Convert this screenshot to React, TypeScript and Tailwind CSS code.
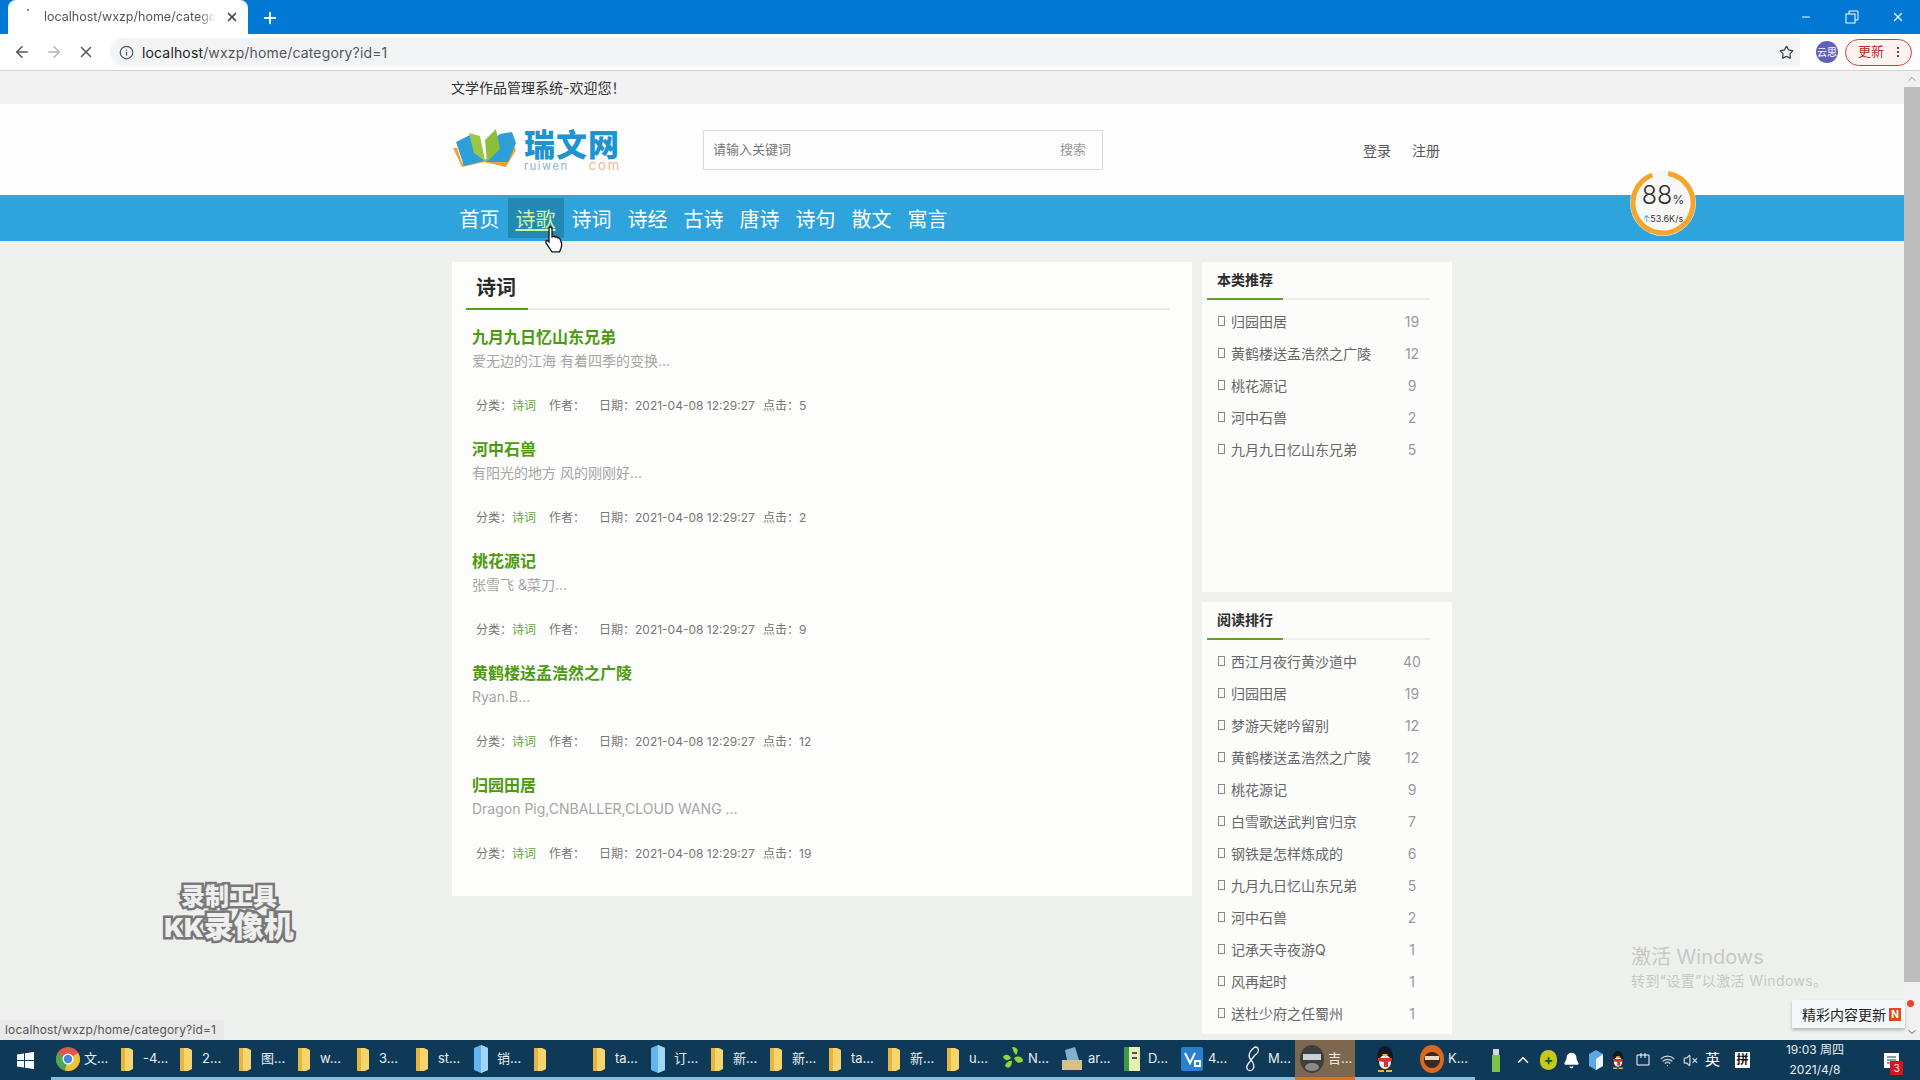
import React from "react";
import { ArrowLeft, ArrowRight, X, Info, Plus, Star, Minus, ChevronUp, ChevronDown, Bell, Wifi, VolumeX } from "lucide-react";

const CJK = "font-['Inter','Noto_Sans_CJK_SC',sans-serif]";

const posts = [
  { t: "九月九日忆山东兄弟", d: "爱无边的江海 有着四季的变换...", n: 5 },
  { t: "河中石兽", d: "有阳光的地方 风的刚刚好...", n: 2 },
  { t: "桃花源记", d: "张雪飞 &菜刀...", n: 9 },
  { t: "黄鹤楼送孟浩然之广陵", d: "Ryan.B...", n: 12 },
  { t: "归园田居", d: "Dragon Pig,CNBALLER,CLOUD WANG ...", n: 19 },
];
const rec: [string, number][] = [
  ["归园田居", 19],
  ["黄鹤楼送孟浩然之广陵", 12],
  ["桃花源记", 9],
  ["河中石兽", 2],
  ["九月九日忆山东兄弟", 5],
];
const rank: [string, number][] = [
  ["西江月夜行黄沙道中", 40],
  ["归园田居", 19],
  ["梦游天姥吟留别", 12],
  ["黄鹤楼送孟浩然之广陵", 12],
  ["桃花源记", 9],
  ["白雪歌送武判官归京", 7],
  ["钢铁是怎样炼成的", 6],
  ["九月九日忆山东兄弟", 5],
  ["河中石兽", 2],
  ["记承天寺夜游Q", 1],
  ["风再起时", 1],
  ["送杜少府之任蜀州", 1],
];
const nav = ["首页", "诗歌", "诗词", "诗经", "古诗", "唐诗", "诗句", "散文", "寓言"];

function Folder() {
  return (
    <svg width="14" height="28" viewBox="0 0 14 28" className="shrink-0">
      <path d="M1 3h8l4 2v19l-4 2H1z" fill="#f6d56f" />
      <path d="M1 3h4v23H1z" fill="#e7b53e" />
    </svg>
  );
}
function Cube() {
  return (
    <svg width="16" height="30" viewBox="0 0 16 30" className="shrink-0">
      <path d="M8 1l7 3v22l-7 3-7-3V4z" fill="#62b5ee" />
      <path d="M8 1l7 3v22l-7 3z" fill="#9fd6f8" />
    </svg>
  );
}
function Chrome() {
  return (
    <svg width="24" height="24" viewBox="0 0 24 24" className="shrink-0">
      <circle cx="12" cy="12" r="12" fill="#e2574c" />
      <path d="M12 12L1.6 6 0 12a12 12 0 0 0 9 11.6z" fill="#4da74f" />
      <path d="M12 12l-3 11.6A12 12 0 0 0 24 12a12 12 0 0 0-2-6z" fill="#f0c33c" />
      <circle cx="12" cy="12" r="5.5" fill="#fff" />
      <circle cx="12" cy="12" r="4.2" fill="#4b86d6" />
    </svg>
  );
}
function Penguin({ size = 24 }: { size?: number }) {
  return (
    <svg width={size} height={size * 1.4} viewBox="0 0 20 28" className="shrink-0">
      <ellipse cx="10" cy="12" rx="8" ry="11" fill="#15181c" />
      <ellipse cx="10" cy="17" rx="6" ry="7" fill="#f4f4f4" />
      <path d="M3 13h14v3l-4 1v5H9v-5l-6-1z" fill="#d8322a" />
      <path d="M7 9h6l-3 3z" fill="#f2b632" />
      <path d="M3 25h6v2H3zM11 25h6v2h-6z" fill="#f2b632" />
    </svg>
  );
}

function TaskItem({ icon, label, w = "w-[59px]", active }: { icon: React.ReactNode; label?: string; w?: string; active?: boolean }) {
  return (
    <div className={`${w} h-10 shrink-0 flex items-center pl-[4px] gap-[3px] border-b-[3px] ${active ? "bg-[#7d674e] border-[#e2701c]" : "border-[#88bedd]"} text-[13px] text-[#e7eef3] ${CJK} ${label === undefined ? "justify-center pr-[4px]" : ""}`}>
      <span className="w-[26px] flex justify-center shrink-0">{icon}</span>
      {label ? <span className="whitespace-nowrap">{label}</span> : null}
    </div>
  );
}

function SideRow({ name, n }: { name: string; n: number }) {
  return (
    <li className="h-8 flex items-center pl-[16px] pr-[25px] text-[14px] text-[#666]">
      <span className="w-[7px] h-[10px] border border-[#888] shrink-0" />
      <span className="ml-[6px] flex-1 whitespace-nowrap">{name}</span>
      <span className="w-[30px] text-center text-[#999]">{n}</span>
    </li>
  );
}

function Side({ title, rows, cls }: { title: string; rows: [string, number][]; cls: string }) {
  return (
    <section className={`bg-[#fcfdfb] ${cls}`}>
      <div className="h-[38px] ml-[5px] mr-[22px] border-b-2 border-[#eceeec] relative">
        <h3 className="pl-[10px] pt-[7px] text-[14px] leading-[22px] font-bold text-[#2b2b2b]">{title}</h3>
        <span className="absolute left-0 -bottom-[2px] w-[76px] h-[2px] bg-[#5f9e2f]" />
      </div>
      <ul className="mt-[5px]">
        {rows.map((r) => (
          <SideRow key={r[0]} name={r[0]} n={r[1]} />
        ))}
      </ul>
    </section>
  );
}

function Logo() {
  return (
    <div className="flex items-center w-[170px] h-[44px]">
      <svg width="70" height="44" viewBox="0 0 70 44" className="shrink-0">
        <path d="M1 20l9 19 22-5 22 5 10-17-3-5-9 17-20-3-22 4-5-15z" fill="#eba32f" />
        <path d="M4 14l14-7 8 4 6 22-20 5z" fill="#2e9ed9" />
        <path d="M60 4l4 11-8 19-22 0 6-22 8-6z" fill="#2e9ed9" />
        <path d="M17 5l11 3 5 25-11-8z" fill="#9cc745" />
        <path d="M44 1l4 20-13 13-2-22z" fill="#8ebd3c" />
      </svg>
      <div className="ml-[2px] flex flex-col pt-[3px]">
        <span className="text-[31px] leading-[29px] font-black tracking-[1px] text-[#1e93d2] whitespace-nowrap">瑞文网</span>
        <span className="text-[11px] leading-[12px] tracking-[1.6px] text-[#8db4cb] whitespace-nowrap">
          ruiwen<span className="ml-[20px] text-[13px] tracking-[2px] text-[#f0b98a]">com</span>
        </span>
      </div>
    </div>
  );
}

export default function App() {
  return (
    <div className={`relative w-[1920px] h-[1080px] overflow-hidden flex flex-col bg-[#eef0ed] ${CJK}`}>
      {/* tab strip */}
      <div className="h-[34px] bg-[#0078d4] flex items-end shrink-0">
        <div className="relative ml-[8px] w-[240px] h-[34px] bg-white rounded-t-[8px] flex items-center pl-[36px] pr-[9px] text-[12.5px] text-[#555]">
          <span className="absolute left-[19px] top-[9px] w-[2px] h-[2px] bg-[#888]" />
          <span className="whitespace-nowrap [mask-image:linear-gradient(to_right,black_90%,transparent)]">localhost/wxzp/home/catego</span>
          <div className="flex-1" />
          <X size={14} strokeWidth={3} className="text-[#444] shrink-0" />
        </div>
        <Plus size={18} strokeWidth={2.5} className="text-white ml-[13px] mb-[7px]" />
        <div className="flex-1" />
        <div className="flex items-center h-[34px] pr-[15px] text-white">
          <Minus size={12} />
          <svg width="16" height="16" viewBox="0 0 16 16" className="ml-[33px]">
            <rect x="1" y="5" width="9" height="9" fill="none" stroke="#fff" strokeWidth="1" />
            <path d="M4 5V2h9v9h-3" fill="none" stroke="#fff" strokeWidth="1" />
          </svg>
          <X size={14} className="ml-[30px]" />
        </div>
      </div>
      {/* toolbar */}
      <div className="h-[37px] bg-white border-b border-[#d2d2d2] flex items-center shrink-0">
        <ArrowLeft size={18} className="ml-[13px] text-[#555]" />
        <ArrowRight size={18} className="ml-[14px] text-[#b5b5b5]" />
        <X size={18} className="ml-[14px] text-[#555]" />
        <div className="ml-[15px] w-[1690px] h-[28px] rounded-l-[14px] bg-[#f1f3f5] flex items-center pl-[9px] text-[14px] text-[#555] tracking-[0.15px]">
          <Info size={15} className="text-[#555] shrink-0" />
          <span className="ml-[8px]"><span className="text-[#222]">localhost</span>/wxzp/home/category?id=1</span>
          <div className="flex-1" />
          <Star size={15} className="text-[#444] mr-[6px]" />
        </div>
        <div className="ml-[16px] w-[22px] h-[22px] rounded-full bg-[#5f62bd] text-white text-[10px] flex items-center justify-center shrink-0 whitespace-nowrap">云思</div>
        <div className="ml-[7px] w-[67px] h-[27px] rounded-full border border-[#d23a3a] bg-[#fdf3f1] flex items-center pl-[12px] text-[13px] text-[#b82d26] shrink-0">
          更新
          <span className="ml-[13px] flex flex-col gap-[2px]">
            <span className="w-[2px] h-[2px] bg-[#b82d26]" />
            <span className="w-[2px] h-[2px] bg-[#b82d26]" />
            <span className="w-[2px] h-[2px] bg-[#b82d26]" />
          </span>
        </div>
      </div>

      <div className="flex-1 min-h-0 flex">
        {/* page */}
        <div className="flex-1 min-w-0 flex flex-col">
          <div className="h-[33px] bg-[#f2f2f3] pl-[451px] flex items-center text-[14px] text-[#333] shrink-0">文学作品管理系统-欢迎您！</div>
          <div className="h-[91px] bg-[#fdfefd] flex items-center pl-[452px] shrink-0">
            <Logo />
            <div className="ml-[81px] w-[400px] h-[40px] border border-[#d9d9d9] bg-[#fdfdfd] flex items-center pl-[9px] pr-[16px] text-[13px] text-[#777]">
              <span className="flex-1">请输入关键词</span>
              <span className="text-[#999]">搜索</span>
            </div>
            <span className="ml-[260px] pt-[1px] text-[14px] text-[#555]">登录</span>
            <span className="ml-[21px] pt-[1px] text-[14px] text-[#555]">注册</span>
          </div>
          <div className="h-[46px] bg-[#2ea3dc] pl-[452px] flex items-center shrink-0 border-b border-[#e4e7e6] box-content">
            {nav.map((n, i) => (
              <div key={n} className={`w-[56px] h-[40px] flex items-center justify-center pt-[3px] pr-[1px] text-[20px] ${i === 1 ? "bg-[#2389b4] text-[#c6f79a] underline underline-offset-2" : "text-white"}`}>
                {n}
              </div>
            ))}
          </div>

          <div className="flex-1 min-h-0 flex items-start pl-[452px] pt-[20px] gap-[10px]">
            <main className="w-[740px] h-[634px] bg-[#fdfefc] pl-[14px] pr-[22px] shrink-0">
              <div className="h-[48px] border-b-2 border-[#e9ebe9] relative">
                <h2 className="pl-[10px] pt-[12px] text-[20px] leading-[28px] font-bold text-[#2b2b2b]">诗词</h2>
                <span className="absolute left-0 -bottom-[2px] w-[62px] h-[2px] bg-[#53a011]" />
              </div>
              {posts.map((p) => (
                <article key={p.t} className="h-[112px] pl-[6px] pt-[15px] first:pt-[16px]">
                  <h4 className="text-[16px] leading-[24px] font-bold text-[#4c9a10]">{p.t}</h4>
                  <p className="text-[14px] leading-[24px] text-[#a5a5a5] whitespace-nowrap">{p.d}</p>
                  <p className="mt-[23px] pl-[4px] flex text-[12px] leading-[20px] text-[#777]">
                    <span className="w-[36px]">分类：</span>
                    <span className="w-[37px] text-[#63a63a]">诗词</span>
                    <span className="w-[50px]">作者：</span>
                    <span className="w-[164px]">日期：2021-04-08 12:29:27</span>
                    <span>点击：{p.n}</span>
                  </p>
                </article>
              ))}
            </main>
            <div className="w-[250px] shrink-0 flex flex-col gap-[10px]">
              <Side title="本类推荐" rows={rec} cls="h-[330px]" />
              <Side title="阅读排行" rows={rank} cls="h-[432px]" />
            </div>
          </div>
        </div>
        {/* scrollbar */}
        <div className="w-[16px] bg-[#f1f1f1] flex flex-col items-center shrink-0">
          <ChevronUp size={12} className="text-[#999] my-[2px] shrink-0" />
          <div className="w-full h-[895px] bg-[#bcbdbc] shrink-0" />
          <div className="flex-1" />
          <ChevronDown size={12} className="text-[#555] my-[2px] shrink-0" />
        </div>
      </div>

      {/* taskbar */}
      <div className="h-10 bg-[#0f3a57] flex items-center shrink-0">
        <div className="w-[51px] flex justify-center shrink-0">
          <svg width="17" height="17" viewBox="0 0 17 17"><path d="M0 2.4l7-1v6.6H0zM8 1.2L17 0v8H8zM0 9h7v6.6l-7-1zM8 9h9v8l-9-1.2z" fill="#fff" /></svg>
        </div>
        <TaskItem icon={<Chrome />} label="文..." />
        {[
          ["f", "-4..."], ["f", "2..."], ["f", "图..."], ["f", "w..."], ["f", "3..."], ["f", "st..."], ["c", "销..."], ["f", ""], ["f", "ta..."], ["c", "订..."], ["f", "新..."], ["f", "新..."], ["f", "ta..."], ["f", "新..."], ["f", "u..."],
        ].map(([k, l], i) => (
          <TaskItem key={i} icon={k === "f" ? <Folder /> : <Cube />} label={l} />
        ))}
        <TaskItem w="w-[60px]" label="N..." icon={<svg width="24" height="26" viewBox="0 0 24 26" className="shrink-0"><path d="M12 1c6 0 7 4 4 8-2-2-3-5-4-8zM3 11c2-4 7-2 8 1-3 3-6 3-8-1zM14 12c4-3 9-1 9 3-3 3-7 2-9-3zM5 20c1-4 5-6 7-5 0 5-3 9-7 5z" fill="#90d536" /></svg>} />
        <TaskItem w="w-[60px]" label="ar..." icon={<svg width="24" height="26" viewBox="0 0 24 26" className="shrink-0"><path d="M2 14h20v10H2z" fill="#d9c08b" /><path d="M5 4l10-3 4 13H7z" fill="#7fb3c9" /></svg>} />
        <TaskItem w="w-[60px]" label="D..." icon={<svg width="20" height="26" viewBox="0 0 20 26" className="shrink-0"><path d="M2 1h16v24H2z" fill="#e8efb5" /><path d="M2 1h5v24H2z" fill="#3d9a45" /><path d="M10 6h5v2h-5zM10 11h5v2h-5z" fill="#555" /></svg>} />
        <TaskItem w="w-[60px]" label="4..." icon={<svg width="22" height="24" viewBox="0 0 22 24" className="shrink-0"><rect width="22" height="24" rx="2" fill="#2b7fd3" /><path d="M4 6l5 10 5-10M14 14h5v5h-5z" stroke="#fff" strokeWidth="2" fill="none" /></svg>} />
        <TaskItem w="w-[60px]" label="M..." icon={<svg width="20" height="28" viewBox="0 0 20 28" className="shrink-0"><path d="M13 2c4 0 5 5 0 8L6 19c-3 4 0 8 4 6 3-2 2-7-1-10-3-3-3-8 4-13z" stroke="#e6edf2" strokeWidth="1.3" fill="none" /></svg>} />
        <TaskItem w="w-[60px]" active label="吉..." icon={<svg width="26" height="30" viewBox="0 0 26 30" className="shrink-0"><ellipse cx="13" cy="15" rx="12" ry="14" fill="#3f3f3f" /><rect x="4" y="10" width="18" height="6" fill="#cfcfcf" /><ellipse cx="13" cy="23" rx="7" ry="4" fill="#8a8a8a" /></svg>} />
        <TaskItem w="w-[60px]" icon={<Penguin size={20} />} />
        <TaskItem w="w-[60px]" label="K..." icon={<svg width="26" height="30" viewBox="0 0 26 30" className="shrink-0"><ellipse cx="13" cy="15" rx="12" ry="14" fill="#d9691f" /><ellipse cx="13" cy="16" rx="8" ry="8" fill="#3a2a22" /><rect x="6" y="12" width="14" height="4" fill="#f0d9c0" /></svg>} />

        <div className="ml-[15px] flex items-center text-white">
          <svg width="12" height="26" viewBox="0 0 12 26" className="shrink-0"><rect x="2" y="8" width="8" height="17" fill="#7dc24a" /><rect x="3" y="2" width="6" height="6" fill="#d8d8d8" /></svg>
          <ChevronUp size={18} className="ml-[12px] shrink-0" />
          <span className="ml-[8px] w-[17px] h-[20px] rounded-full bg-[#c8c81e] flex items-center justify-center text-[14px] leading-none font-bold text-[#14551f]">+</span>
          <Bell size={17} fill="#fff" className="ml-[6px] shrink-0" />
          <svg width="14" height="20" viewBox="0 0 14 20" className="ml-[9px] shrink-0"><path d="M7 0l7 4v12l-7 4-7-4V4z" fill="#5aa7e6" /><path d="M7 9l7-5v12l-7 4z" fill="#e8f3fb" /></svg>
          <span className="ml-[8px]"><Penguin size={14} /></span>
          <svg width="14" height="16" viewBox="0 0 14 16" className="ml-[11px] shrink-0"><path d="M1 3h12v10H1zM5 1v5M9 1v5" stroke="#fff" fill="none" /></svg>
          <Wifi size={15} className="ml-[10px] shrink-0 text-[#c9d4db]" />
          <VolumeX size={15} className="ml-[8px] shrink-0 text-[#c9d4db]" />
          <span className="ml-[7px] text-[15px]">英</span>
          <span className="ml-[15px] w-[15px] h-[16px] bg-white text-[#111] text-[12px] leading-[16px] text-center font-bold">拼</span>
        </div>
        <div className="ml-[20px] w-[90px] flex flex-col items-center text-[12px] leading-[20px] text-[#e8eef2] shrink-0">
          <span className="whitespace-nowrap">19:03 周四</span>
          <span>2021/4/8</span>
        </div>
        <div className="ml-[23px] relative shrink-0">
          <svg width="17" height="17" viewBox="0 0 17 17"><path d="M1 1h15v15H1z" fill="#fff" /><path d="M4 5h9M4 8h9M4 11h6" stroke="#0f3a57" /></svg>
          <span className="absolute -right-[3px] -bottom-[6px] w-[13px] h-[14px] bg-[#d8141e] text-white text-[10px] leading-[14px] text-center">3</span>
        </div>
      </div>

      {/* overlays */}
      <svg className="absolute left-[544px] top-[225px] z-10" width="22" height="30" viewBox="0 0 22 30">
        <path d="M6 2c1.500 0 2 1 2 2v8l1-.5c1-.4 2 0 2.300.6 1-.4 2 0 2.400.8 1-.3 2 .2 2.300 1l1.500 4c.6 3-.5 6-2 9H8l-6-9c-1-1.500.5-3 2-2l1 1V4c0-1 .5-2 1-2z" fill="#fff" stroke="#111" strokeWidth="1.300" />
      </svg>

      <div className="absolute left-[1631px] top-[943px] text-[#c6c8c6]">
        <div className="text-[20px] leading-[28px]">激活 Windows</div>
        <div className="text-[14px] leading-[20px] tracking-[0.4px]">转到“设置”以激活 Windows。</div>
      </div>

      <div className="absolute left-[1792px] top-[1000px] w-[113px] h-[28px] bg-[#f3f8fa] shadow-[0_2px_3px_rgba(0,0,0,0.25)] flex items-center pl-[10px] text-[14px] text-[#222]">
        精彩内容更新
        <span className="ml-[3px] w-[12px] h-[13px] bg-[#de4a22] text-white text-[10px] leading-[13px] text-center font-bold">N</span>
      </div>
      <span className="absolute left-[1907px] top-[1000px] w-[7px] h-[7px] rounded-full bg-[#e8452c]" />

      <div className="absolute left-0 top-[1020px] h-[20px] w-[224px] bg-[#e9e9e9] pl-[5px] text-[12px] leading-[20px] tracking-[0.15px] text-[#555]">localhost/wxzp/home/category?id=1</div>

      <div className="absolute left-[162px] top-[882px] w-[134px] flex flex-col items-center font-black text-[#eeeeee] [-webkit-text-stroke:5px_#787878] [paint-order:stroke_fill]">
        <span className="text-[24px] leading-[30px] whitespace-nowrap [paint-order:stroke_fill]">录制工具</span>
        <span className="text-[30px] leading-[29px] whitespace-nowrap [paint-order:stroke_fill]"><span className="text-[26px]">KK</span>录像机</span>
      </div>

      <div className="absolute left-[1629px] top-[169px] w-[68px] h-[68px]">
        <svg width="68" height="68" viewBox="0 0 68 68" className="absolute inset-0">
          <circle cx="34" cy="34" r="33" fill="#f7f8f5" />
          <circle cx="34" cy="34" r="30" fill="none" stroke="#f5a52b" strokeWidth="5" strokeDasharray="172 16.500" transform="rotate(-80 34 34)" />
        </svg>
        <div className="absolute inset-0 flex flex-col items-center justify-center text-[#333]">
          <div className="leading-[26px]"><span className="text-[25px] font-light">88</span><span className="text-[12px]">%</span></div>
          <div className="text-[9px] leading-[12px] whitespace-nowrap"><span className="text-[#2e9ed9]">↑</span>53.6K/s</div>
        </div>
      </div>
    </div>
  );
}
